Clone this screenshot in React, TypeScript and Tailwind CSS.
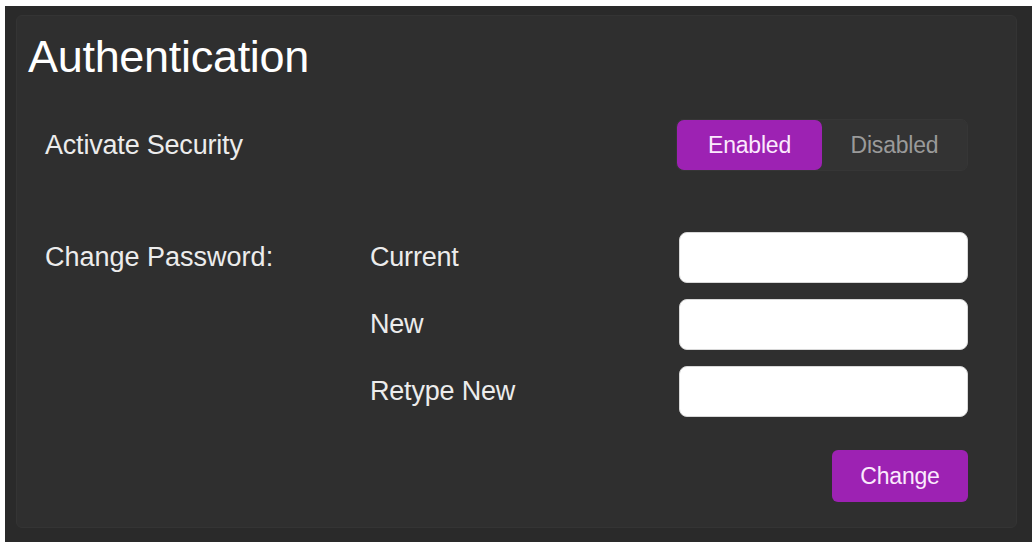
import React, { useState } from "react";

const font = { fontFamily: '"Liberation Sans", Arial, sans-serif' };

function PasswordField({ label }: { label: string }) {
  return (
    <>
      <div className="flex h-[51px] items-center text-[27px] tracking-[-0.2px] text-[#ececec]">
        {label}
      </div>
      <input
        type="password"
        aria-label={label}
        className="h-[51px] w-[289px] rounded-[8px] border border-[#d8d8d8] bg-white px-3 text-[20px] text-black outline-none"
      />
    </>
  );
}

export default function App() {
  const [enabled, setEnabled] = useState(true);

  return (
    <div className="h-[542px] w-[1032px] bg-white pl-[5px] pt-[6px]" style={font}>
      <div className="h-[536px] w-[1027px] bg-[#2a2a2a] pl-[11px] pt-[9px]">
        <div className="flex h-[513px] w-[1001px] flex-col rounded-[6px] border border-[#343434] bg-[#2f2f2f]">
          {/* Heading */}
          <h1 className="pl-[11px] pt-[18px] text-[45px] leading-none tracking-[-0.3px] text-white">
            Authentication
          </h1>

          {/* Security toggle */}
          <div className="mt-[40px] flex h-[52px] items-center justify-between pl-[28px] pr-[48px]">
            <span className="text-[27px] tracking-[-0.2px] text-[#ececec]">Activate Security</span>
            <div className="flex h-[52px] w-[292px] rounded-[7px] border border-[#363636] bg-[#333333]">
              <button
                onClick={() => setEnabled(true)}
                className={
                  enabled
                    ? "h-full w-[145px] rounded-[7px] bg-[#9d22b3] text-[23px] tracking-[-0.2px] text-[#fbeafd]"
                    : "h-full w-[145px] rounded-[7px] text-[23px] tracking-[-0.2px] text-[#9a9a9a]"
                }
              >
                Enabled
              </button>
              <button
                onClick={() => setEnabled(false)}
                className={
                  !enabled
                    ? "h-full flex-1 rounded-[7px] bg-[#9d22b3] text-[23px] tracking-[-0.2px] text-[#fbeafd]"
                    : "h-full flex-1 rounded-[7px] text-[23px] tracking-[-0.2px] text-[#9a9a9a]"
                }
              >
                Disabled
              </button>
            </div>
          </div>

          {/* Password change */}
          <div className="mt-[61px] flex pl-[28px] pr-[48px]">
            <div className="flex h-[51px] w-[325px] items-center text-[27px] tracking-[0px] text-[#ececec]">
              Change Password:
            </div>
            <div className="grid flex-1 grid-cols-[1fr_289px] gap-y-[16px]">
              <PasswordField label="Current" />
              <PasswordField label="New" />
              <PasswordField label="Retype New" />
            </div>
          </div>

          <div className="mt-[33px] flex justify-end pr-[48px]">
            <button className="h-[52px] w-[136px] rounded-[6px] bg-[#9d22b3] text-[23px] tracking-[-0.2px] text-[#fbeafd]">
              Change
            </button>
          </div>
        </div>
      </div>
    </div>
  );
}
